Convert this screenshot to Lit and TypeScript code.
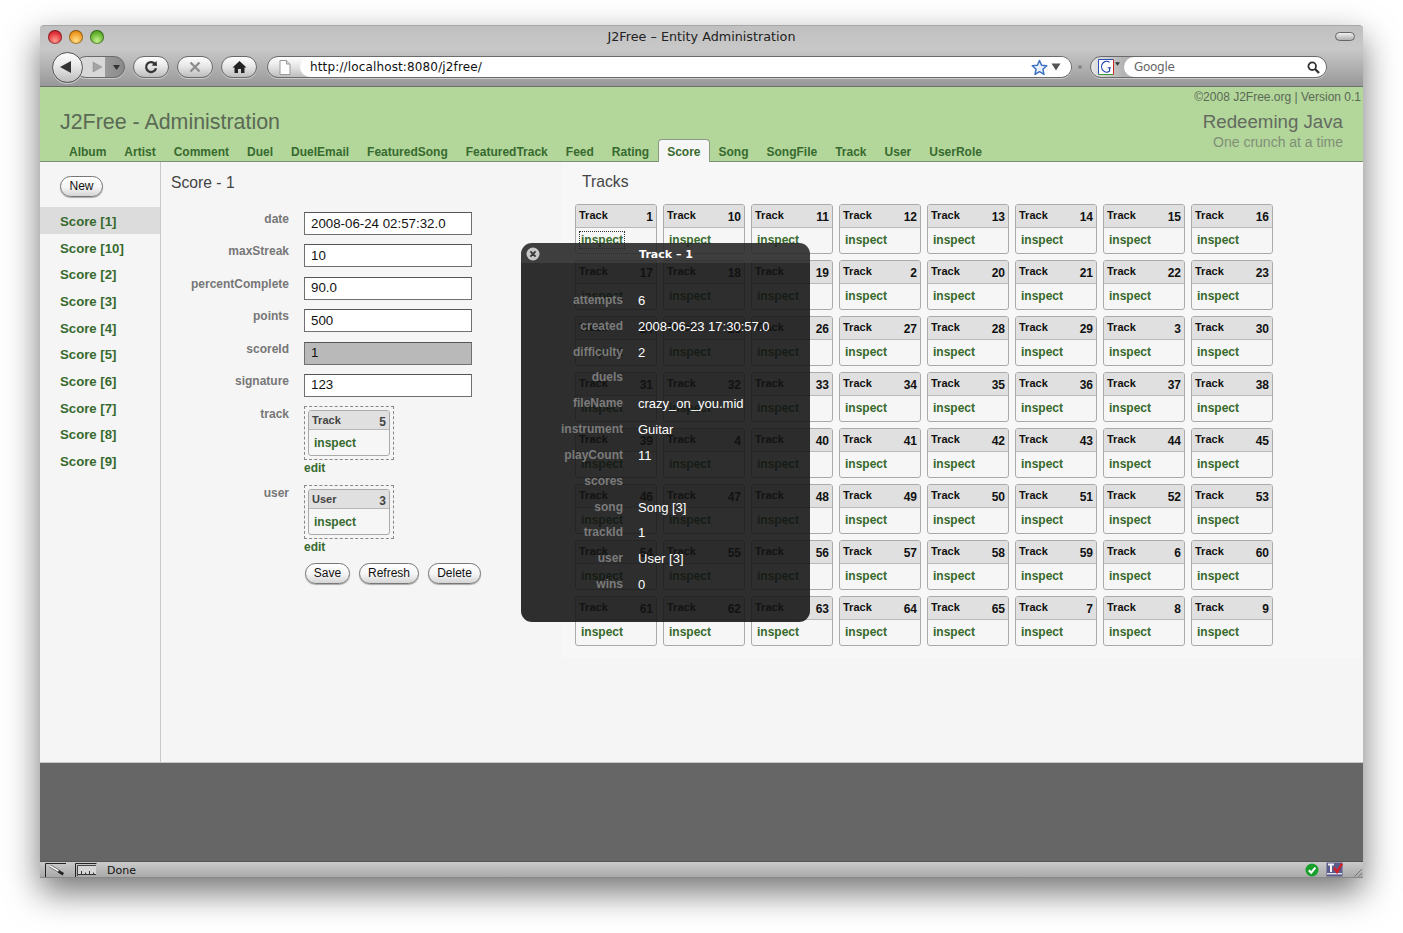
import { LitElement, css, html, svg } from "lit";
import { customElement } from "lit/decorators.js";

const TABS = ["Album", "Artist", "Comment", "Duel", "DuelEmail", "FeaturedSong", "FeaturedTrack", "Feed", "Rating", "Score", "Song", "SongFile", "Track", "User", "UserRole"];
const SCORES = ["1", "10", "2", "3", "4", "5", "6", "7", "8", "9"];
const FIELDS = [
  { label: "date", value: "2008-06-24 02:57:32.0" },
  { label: "maxStreak", value: "10" },
  { label: "percentComplete", value: "90.0" },
  { label: "points", value: "500" },
  { label: "scoreId", value: "1", disabled: true },
  { label: "signature", value: "123" }
];
const TRACKS = [
  1, 10, 11, 12, 13, 14, 15, 16,
  17, 18, 19, 2, 20, 21, 22, 23,
  24, 25, 26, 27, 28, 29, 3, 30,
  31, 32, 33, 34, 35, 36, 37, 38,
  39, 4, 40, 41, 42, 43, 44, 45,
  46, 47, 48, 49, 50, 51, 52, 53,
  54, 55, 56, 57, 58, 59, 6, 60,
  61, 62, 63, 64, 65, 7, 8, 9
];
const DETAILS = [
  ["attempts", "6"],
  ["created", "2008-06-23 17:30:57.0"],
  ["difficulty", "2"],
  ["duels", ""],
  ["fileName", "crazy_on_you.mid"],
  ["instrument", "Guitar"],
  ["playCount", "11"],
  ["scores", ""],
  ["song", "Song [3]"],
  ["trackId", "1"],
  ["user", "User [3]"],
  ["wins", "0"]
];

const icons = {
  back: svg`<svg width="16" height="16" viewBox="0 0 16 16"><path d="M2 8 L13 2 V14 Z" fill="#333"/></svg>`,
  forward: svg`<svg width="12" height="12" viewBox="0 0 12 12"><path d="M11 6 L2 1 V11 Z" fill="#a4a4a4" stroke="#8a8a8a" stroke-width=".5"/></svg>`,
  drop: svg`<svg width="7" height="5" viewBox="0 0 7 5"><path d="M0 0 H7 L3.5 5 Z" fill="#333"/></svg>`,
  reload: svg`<svg width="14" height="14" viewBox="0 0 14 14"><path d="M11.2 4.2 A5 5 0 1 0 12 8.2" fill="none" stroke="#333" stroke-width="2.2"/><path d="M7.6 5.6 L13 6 L12.6 1 Z" fill="#333"/></svg>`,
  stop: svg`<svg width="14" height="14" viewBox="0 0 14 14"><path d="M2.5 2.5 L11.5 11.5 M11.5 2.5 L2.5 11.5" stroke="#8d8d8d" stroke-width="2.4"/></svg>`,
  home: svg`<svg width="15" height="14" viewBox="0 0 15 14"><path d="M7.5 1 L14.5 7.5 H12.5 V13 H9 V9 H6 V13 H2.5 V7.5 H.5 Z" fill="#222"/></svg>`,
  page: svg`<svg width="12" height="15" viewBox="0 0 12 15"><path d="M1 .5 H7.5 L11 4 V14.5 H1 Z" fill="#fdfdfd" stroke="#999"/><path d="M7.5 .5 V4 H11" fill="#ddd" stroke="#999"/></svg>`,
  star: svg`<svg width="17" height="17" viewBox="0 0 17 17"><path d="M8.5 1.5 L10.6 6.3 L15.8 6.8 L11.9 10.2 L13 15.4 L8.5 12.7 L4 15.4 L5.1 10.2 L1.2 6.8 L6.4 6.3 Z" fill="#e9f0fa" stroke="#3d72c2" stroke-width="1.5" stroke-linejoin="round"/></svg>`,
  arrow: svg`<svg width="10" height="8" viewBox="0 0 10 8"><path d="M.5 .5 H9.5 L5 7.5 Z" fill="#555"/></svg>`,
  google: svg`<svg width="16" height="16" viewBox="0 0 16 16"><rect x=".5" y=".5" width="15" height="15" fill="#fff"/><path d="M.5 15.5 V.5 H15.5" fill="none" stroke="#2a4fb5"/><path d="M.5 15.5 H15.5" stroke="#3a9a3a"/><path d="M15.5 .5 V15.5" stroke="#c22"/><path d="M11.6 3.4 A5 5.4 0 1 0 11.6 12 V8.8" fill="none" stroke="#1c3fb0" stroke-width="1.1"/><path d="M9.6 8.8 H13" stroke="#1c3fb0"/></svg>`,
  search: svg`<svg width="13" height="13" viewBox="0 0 13 13"><circle cx="5.2" cy="5.2" r="3.8" fill="none" stroke="#333" stroke-width="1.8"/><path d="M8 8 L12 12" stroke="#333" stroke-width="2.4"/></svg>`,
  close: svg`<svg width="14" height="14" viewBox="0 0 14 14"><circle cx="7" cy="7" r="6.5" fill="#c8c8c8"/><path d="M4.4 4.4 L9.6 9.6 M9.6 4.4 L4.4 9.6" stroke="#3a3a3a" stroke-width="1.9"/></svg>`,
  dropper: svg`<svg width="22" height="14" viewBox="0 0 22 14"><path d="M.5 14 V.5 H21" fill="none" stroke="#222"/><path d="M5 3 L14.5 8.5" stroke="#555" stroke-width="3"/><path d="M5 3 L14.5 8.5" stroke="#f2f2f2" stroke-width="1.6"/><path d="M14 7 L19 10 L17.6 12.4 L12.8 9.4 Z" fill="#222"/></svg>`,
  ruler: svg`<svg width="22" height="14" viewBox="0 0 22 14"><path d="M.5 14 V.5 H21.5" fill="none" stroke="#222"/><path d="M2.5 13 V2.5 H21" fill="none" stroke="#444"/><rect x="3" y="3" width="18" height="9" fill="#d6d6d6"/><path d="M3 11.5 H21 M6.5 11.5 V8 M10.5 11.5 V9.5 M14.5 11.5 V8 M18.5 11.5 V9.5" stroke="#333"/></svg>`,
  ok: svg`<svg width="14" height="14" viewBox="0 0 14 14"><circle cx="7" cy="7" r="6.5" fill="#18a02c"/><path d="M3.8 7.2 L6.2 9.6 L10.4 4.6" fill="none" stroke="#fff" stroke-width="2.2"/></svg>`,
  tv: svg`<svg width="17" height="15" viewBox="0 0 17 15"><rect x=".5" y=".5" width="16" height="14" fill="#5c5c8c"/><rect x="1" y="11" width="15" height="1.4" fill="#e6e6f0"/><path d="M2 2.5 H8 M5 2.5 V10" stroke="#f2f2f8" stroke-width="2"/><path d="M8 5.5 L11 10 L16 1.5" fill="none" stroke="#d0202c" stroke-width="2.4"/></svg>`
};

@customElement("app-root")
export class AppRoot extends LitElement {
  static styles = css`
    :host {
      display: block;
      min-height: 933px;
      padding: 25px 40px 55px;
      box-sizing: border-box;
      background: #fff;
      font-family: "Liberation Sans", Arial, sans-serif;
      overflow: hidden;
    }

    .window {
      position: relative;
      display: flex;
      flex-direction: column;
      height: 853px;
      border-radius: 4px 4px 0 0;
      box-shadow: 0 14px 34px rgb(0 0 0 / 55%);
    }

    /* browser chrome */
    .chrome {
      height: 60px;
      flex: none;
      border-top: 1px solid #a8a8a8;
      border-bottom: 1px solid #6e6e6e;
      border-radius: 4px 4px 0 0;
      box-sizing: content-box;
      background: linear-gradient(#c0c0c0 0, #c8c8c8 38%, #b6b6b6 62%, #989898 100%);
    }

    .titlebar {
      display: grid;
      grid-template-columns: 1fr auto 1fr;
      align-items: center;
      height: 21px;
      padding: 0 8px;
    }

    .lights {
      display: flex;
      gap: 7px;
    }

    .light {
      width: 14px;
      height: 14px;
      border-radius: 50%;
      box-shadow: inset 0 0 0 1px rgb(0 0 0 / 35%);
    }

    .red { background: radial-gradient(circle at 50% 75%, #ff9a8e, #e0313a 60%, #a81c22); }
    .amber { background: radial-gradient(circle at 50% 75%, #ffe08a, #f09a22 60%, #b86e10); }
    .green { background: radial-gradient(circle at 50% 75%, #c2f08c, #62b22c 60%, #3f8a1a); }

    .window-title {
      font: 12.75px "DejaVu Sans", sans-serif;
      color: #222;
    }

    .pill {
      justify-self: end;
      width: 18px;
      height: 7px;
      border: 1px solid #666;
      border-radius: 5px;
      background: linear-gradient(#f0f0f0, #b0b0b0);
    }

    .toolbar {
      display: flex;
      align-items: center;
      height: 38px;
      padding: 0 0 0 12px;
      margin-top: 1px;
    }

    .round {
      display: flex;
      align-items: center;
      justify-content: center;
      box-sizing: border-box;
      height: 22px;
      border: 1px solid #6a6a6a;
      border-radius: 11px;
      background: linear-gradient(#fdfdfd, #e8e8e8 45%, #bdbdbd);
      box-shadow: 0 1px 0 rgb(255 255 255 / 45%);
    }

    .back {
      position: relative;
      z-index: 1;
      width: 31px;
      height: 31px;
      border-radius: 50%;
      border-color: #555;
      padding-right: 3px;
    }

    .forward {
      width: 50px;
      margin-left: -8px;
      padding-left: 8px;
      justify-content: flex-start;
      background: linear-gradient(90deg, #d8d8d8 0, #d8d8d8 60%, #9a9a9a 61%, #8a8a8a 100%);
    }

    .forward svg:first-child { margin-left: 7px; margin-right: 10px; }
    .tool { width: 36px; margin-left: 8px; }

    .urlbar {
      display: flex;
      align-items: center;
      width: 805px;
      margin-left: 10px;
      padding: 0;
      justify-content: flex-start;
      overflow: hidden;
    }

    .urlbar .doc {
      flex: none;
      display: flex;
      justify-content: center;
      width: 31px;
      padding-left: 1px;
    }

    .field {
      flex: 1;
      display: flex;
      align-items: center;
      height: 100%;
      background: #fff;
      border-radius: 11px 0 0 11px;
      font: 12px "DejaVu Sans", sans-serif;
      color: #111;
    }

    .url-text {
      flex: 1;
      padding-left: 10px;
      letter-spacing: 0.14px;
    }

    .field svg { flex: none; }
    .field .star { display: flex; margin-right: 3px; }
    .field .arrow { display: flex; margin-right: 10px; }

    .sep {
      width: 4px;
      height: 4px;
      margin: 0 8px 0 6px;
      border-radius: 50%;
      background: #888;
    }

    .searchbar {
      width: 237px;
      justify-content: flex-start;
      padding: 0;
      overflow: hidden;
      background: linear-gradient(90deg, #e6e6e6, #b4b4b4 32px);
    }

    .searchbar .engine {
      flex: none;
      display: flex;
      align-items: center;
      gap: 1px;
      width: 33px;
      padding-left: 7px;
      box-sizing: border-box;
    }

    .searchbar .engine svg:last-child { width: 5px; height: 4px; margin-top: -7px; }
    .searchbar .field { color: #666; }
    .searchbar .url-text { padding-left: 10px; letter-spacing: -0.3px; }
    .searchbar .field svg { margin-right: 6px; }

    /* page */
    .masthead {
      position: relative;
      flex: none;
      display: flex;
      justify-content: space-between;
      height: 75px;
      box-sizing: border-box;
      border-bottom: 1px solid #7d8f75;
      background: #b3d69b;
    }

    .brand {
      display: flex;
      flex-direction: column;
      justify-content: flex-end;
      padding-left: 20px;
    }

    .brand h1 {
      margin: 0 0 4px;
      font-size: 21.4px;
      line-height: 26px;
      font-weight: 400;
      color: #5a6a55;
    }

    .tabs {
      display: flex;
      height: 23px;
      margin-bottom: -1px;
    }

    .tab {
      display: flex;
      align-items: center;
      box-sizing: border-box;
      padding: 2px 9px 0;
      font-size: 12px;
      font-weight: 700;
      color: #376a2e;
    }

    .tab.active {
      padding: 2px 8px 0;
      border: 1px solid #8a9a84;
      border-bottom: none;
      border-radius: 4px 4px 0 0;
      background: #f6f6f6;
    }

    .motto {
      display: flex;
      flex-direction: column;
      align-items: flex-end;
      padding-right: 2px;
    }

    .motto small {
      margin-top: 3px;
      font-size: 12px;
      line-height: 14px;
      color: #5a6a55;
    }

    .motto strong {
      margin: 6px 18px 0 0;
      font-size: 18.7px;
      line-height: 24px;
      font-weight: 400;
      color: #636b60;
    }

    .motto span {
      margin: 0 18px 0 0;
      font-size: 14px;
      line-height: 16px;
      color: #7f9076;
    }

    .main {
      flex: none;
      display: flex;
      height: 601px;
      box-sizing: border-box;
      border-bottom: 1px solid #c8c8c8;
      background: #f5f5f5;
    }

    .btn {
      box-sizing: border-box;
      height: 21px;
      padding: 0 0 1px;
      border: 1px solid #777;
      border-radius: 11px;
      background: linear-gradient(#fff, #f4f4f4 55%, #d4d4d4);
      box-shadow: 0 1px 1px rgb(0 0 0 / 30%);
      font: 12px "Liberation Sans", Arial, sans-serif;
      color: #111;
    }

    .save { width: 45px; }
    .refresh { width: 60px; }
    .delete { width: 53px; }

    .side {
      flex: none;
      width: 121px;
      box-sizing: border-box;
      border-right: 1px solid #c9c9c9;
      padding-top: 14px;
    }

    .side .btn {
      display: block;
      width: 43px;
      margin: 0 0 10px 20px;
    }

    .side a {
      display: block;
      height: 26.67px;
      line-height: 29px;
      padding-left: 20px;
      font-size: 13.2px;
      font-weight: 700;
      color: #376a2e;
    }

    .side a.current { background: #dcdcdc; }

    .editor {
      flex: none;
      width: 401px;
      box-sizing: border-box;
      padding: 11px 0 0 10px;
    }

    .editor h2,
    .tracks h2 {
      margin: 0;
      font-size: 15.7px;
      line-height: 19px;
      font-weight: 400;
      color: #444;
    }

    .form {
      display: grid;
      grid-template-columns: 118px 1fr;
      column-gap: 15px;
      margin-top: 20px;
    }

    .form label {
      text-align: right;
      font-size: 12px;
      line-height: 14px;
      font-weight: 700;
      color: #777;
    }

    .form label.ref-label { padding-top: 1px; }

    .form input {
      display: block;
      box-sizing: border-box;
      width: 168px;
      height: 23px;
      margin: 0 0 9.4px;
      padding: 0 6px 1px;
      border: 1px solid #707070;
      border-top-color: #555;
      border-radius: 0;
      background: #fff;
      font: 13.3px "Liberation Sans", Arial, sans-serif;
      color: #111;
    }

    .form input:disabled {
      background: #b9b9b9;
      color: #111;
    }

    .ref {
      width: 90px;
      height: 54px;
      box-sizing: border-box;
      padding: 3px;
      border: 1px dashed #888;
    }

    .edit {
      display: block;
      height: 25px;
      line-height: 16px;
      font-size: 12px;
      font-weight: 700;
      color: #376a2e;
    }

    .actions {
      display: flex;
      grid-column: 2;
      gap: 9px;
      padding-left: 1px;
      margin-top: -1px;
    }

    .card {
      box-sizing: border-box;
      width: 82px;
      height: 50px;
      border: 1px solid #aaa;
      border-radius: 3px;
      background: #f6f6f6;
      overflow: hidden;
    }

    .ref .card {
      height: 46px;
    }

    .card header {
      display: flex;
      justify-content: space-between;
      align-items: center;
      box-sizing: border-box;
      height: 23px;
      padding: 0 3px;
      border-bottom: 1px solid #b8b8b8;
      background: #e0e0e0;
      font-weight: 700;
      color: #111;
    }

    .ref .card header { height: 19px; padding-top: 2px; color: #444; }
    .card header span { font-size: 11px; margin-top: -2px; }
    .card header b { font-size: 12px; margin-top: 2px; }

    .card a {
      display: block;
      width: max-content;
      margin: 4px 0 0 4px;
      padding: 0 1px;
      line-height: 16px;
      font-size: 12px;
      font-weight: 700;
      color: #376a2e;
    }

    .card a.focused { outline: 1px dotted #333; }
    .ref .card a { margin-top: 5px; }

    .tracks {
      flex: 1;
      align-self: flex-start;
      box-sizing: border-box;
      height: 496px;
      padding: 10px 0 0 13px;
      background: #f7f7f7;
    }

    .tracks h2 { padding-left: 7px; }

    .track-grid {
      display: grid;
      grid-template-columns: repeat(8, 82px);
      grid-auto-rows: 50px;
      gap: 6px;
      margin-top: 13px;
    }

    .deck {
      flex: 1;
      background: #666;
    }

    .status {
      flex: none;
      display: flex;
      align-items: center;
      height: 17px;
      box-sizing: border-box;
      padding-left: 5px;
      border-top: 1px solid #555;
      border-bottom: 1px solid #888;
      background: linear-gradient(#cbcbcb, #a9a9a9);
      font: 11px "DejaVu Sans", sans-serif;
      color: #111;
    }

    .status svg { flex: none; }
    .status .gap { display: flex; margin-left: 8px; }
    .status .done { flex: 1; margin-left: 10px; padding-top: 1px; }
    .status .tv { display: flex; margin-left: 7px; }

    .grip {
      width: 10px;
      height: 10px;
      margin: 4px 1px 0 9px;
      background: repeating-linear-gradient(135deg, transparent 0 2px, #777 2px 3px);
      clip-path: polygon(100% 0, 100% 100%, 0 100%);
    }

    /* the inspector over the page */
    .hud {
      position: absolute;
      left: 481px;
      top: 218px;
      width: 289px;
      height: 379px;
      border-radius: 11px;
      background: rgb(18 18 18 / 88%);
      color: #fff;
    }

    .hud header {
      position: relative;
      display: flex;
      justify-content: center;
      align-items: center;
      height: 20px;
      border-radius: 11px 11px 0 0;
      background: rgb(255 255 255 / 8%);
      font: 700 11px "DejaVu Sans", sans-serif;
    }

    .hud header svg {
      position: absolute;
      left: 5px;
      top: 4px;
    }

    .hud header span { margin-left: 1px; padding-top: 3px; }

    .hud dl {
      display: grid;
      grid-template-columns: 102px 1fr;
      grid-auto-rows: 25.82px;
      column-gap: 15px;
      margin: 25px 0 0;
    }

    .hud dt {
      text-align: right;
      font-size: 12px;
      line-height: 24px;
      font-weight: 700;
      color: #7b7b7b;
    }

    .hud dd {
      margin: 0;
      font-size: 13px;
      line-height: 26px;
    }
  `;

  card(name: string, id: number, focused = false) {
    return html`
      <div class="card">
        <header><span>${name}</span><b>${id}</b></header>
        <a class=${focused ? "focused" : ""}>inspect</a>
      </div>
    `;
  }

  render() {
    return html`
      <div class="window">
        <div class="chrome">
          <div class="titlebar">
            <div class="lights">
              <div class="light red"></div>
              <div class="light amber"></div>
              <div class="light green"></div>
            </div>
            <div class="window-title">J2Free – Entity Administration</div>
            <div class="pill"></div>
          </div>
          <div class="toolbar">
            <div class="round back">${icons.back}</div>
            <div class="round forward">${icons.forward}${icons.drop}</div>
            <div class="round tool">${icons.reload}</div>
            <div class="round tool">${icons.stop}</div>
            <div class="round tool">${icons.home}</div>
            <div class="round urlbar">
              <div class="doc">${icons.page}</div>
              <div class="field">
                <span class="url-text">http://localhost:8080/j2free/</span>
                <span class="star">${icons.star}</span>
                <span class="arrow">${icons.arrow}</span>
              </div>
            </div>
            <div class="sep"></div>
            <div class="round searchbar">
              <div class="engine">${icons.google}${icons.drop}</div>
              <div class="field">
                <span class="url-text">Google</span>
                ${icons.search}
              </div>
            </div>
          </div>
        </div>

        <div class="masthead">
          <div class="brand">
            <h1>J2Free - Administration</h1>
            <nav class="tabs">
              ${TABS.map(tab => html`<a class="tab ${tab === "Score" ? "active" : ""}">${tab}</a>`)}
            </nav>
          </div>
          <div class="motto">
            <small>©2008 J2Free.org | Version 0.1</small>
            <strong>Redeeming Java</strong>
            <span>One crunch at a time</span>
          </div>
        </div>

        <div class="main">
          <aside class="side">
            <button class="btn">New</button>
            ${SCORES.map(id => html`<a class=${id === "1" ? "current" : ""}>Score [${id}]</a>`)}
          </aside>

          <section class="editor">
            <h2>Score - 1</h2>
            <div class="form">
              ${FIELDS.map(field => html`
                <label>${field.label}</label>
                <input value=${field.value} ?disabled=${field.disabled} />
              `)}
              <label class="ref-label">track</label>
              <div>
                <div class="ref">${this.card("Track", 5)}</div>
                <a class="edit">edit</a>
              </div>
              <label class="ref-label">user</label>
              <div>
                <div class="ref">${this.card("User", 3)}</div>
                <a class="edit">edit</a>
              </div>
              <div class="actions">
                <button class="btn save">Save</button>
                <button class="btn refresh">Refresh</button>
                <button class="btn delete">Delete</button>
              </div>
            </div>
          </section>

          <section class="tracks">
            <h2>Tracks</h2>
            <div class="track-grid">
              ${TRACKS.map((id, i) => this.card("Track", id, i === 0))}
            </div>
          </section>
        </div>

        <div class="deck"></div>

        <div class="status">
          ${icons.dropper}
          <span class="gap">${icons.ruler}</span>
          <span class="done">Done</span>
          ${icons.ok}
          <span class="tv">${icons.tv}</span>
          <div class="grip"></div>
        </div>

        <div class="hud">
          <header>${icons.close}<span>Track – 1</span></header>
          <dl>
            ${DETAILS.map(([key, value]) => html`<dt>${key}</dt><dd>${value}</dd>`)}
          </dl>
        </div>
      </div>
    `;
  }
}
